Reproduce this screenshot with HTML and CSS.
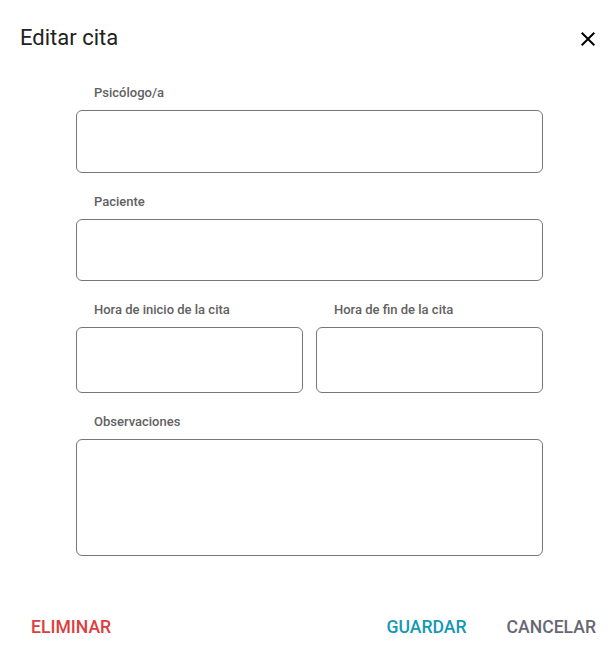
FILE: index.html
```html
<!DOCTYPE html>
<html lang="es">
<head>
<meta charset="utf-8">
<title>Editar cita</title>
<link rel="stylesheet" href="styles.css">
</head>
<body>
<div class="dialog">
  <header class="head">
    <h1 class="title">Editar cita</h1>
    <button class="close" aria-label="Cerrar">
      <svg width="24" height="24" viewBox="0 0 24 24"><path d="M19 6.41L17.59 5 12 10.59 6.41 5 5 6.41 10.59 12 5 17.59 6.41 19 12 13.41 17.59 19 19 17.59 13.41 12z" fill="#000"/></svg>
    </button>
  </header>
  <form class="form">
    <div class="field">
      <label class="label">Psicólogo/a</label>
      <div class="box h63"></div>
    </div>
    <div class="field">
      <label class="label">Paciente</label>
      <div class="box h62"></div>
    </div>
    <div class="row">
      <div class="field">
        <label class="label">Hora de inicio de la cita</label>
        <div class="box h66"></div>
      </div>
      <div class="field">
        <label class="label">Hora de fin de la cita</label>
        <div class="box h66"></div>
      </div>
    </div>
    <div class="field">
      <label class="label">Observaciones</label>
      <div class="box h117"></div>
    </div>
  </form>
  <footer class="actions">
    <button class="btn danger">Eliminar</button>
    <div class="right">
      <button class="btn primary">Guardar</button>
      <button class="btn muted">Cancelar</button>
    </div>
  </footer>
</div>
</body>
</html>
```
FILE: styles.css
```css
* { box-sizing: border-box; }
html, body { margin: 0; padding: 0; background: #fff; }
body { font-family: Roboto, "Noto Sans", sans-serif; }
.dialog { width: 614px; height: 648px; display: flex; flex-direction: column; }
.head {
  display: flex; align-items: center; justify-content: space-between;
  padding: 26px 14px 0 20px; height: 51px;
}
.title { margin: 0; font-size: 22px; font-weight: 400; line-height: 24px; color: #212121; margin-top: -2px; }
.close { border: 0; background: none; padding: 0; width: 24px; height: 24px; display: flex; cursor: pointer; margin-top: 1px; }
.form {
  display: flex; flex-direction: column; gap: 21px;
  padding: 34px 71px 0 76px;
}
.field { display: flex; flex-direction: column; gap: 9px; min-width: 0; }
.row { display: grid; grid-template-columns: 1fr 1fr; gap: 13px; }
.label {
  font-size: 13px; font-weight: 500; line-height: 16px; color: #616161;
  padding-left: 18px;
}
.box { border: 1px solid #777; border-radius: 6px; }
.h63 { height: 63px; }
.h62 { height: 62px; }
.h66 { height: 66px; }
.h117 { height: 117px; }
.actions {
  margin-top: auto; display: flex; justify-content: space-between; align-items: center;
  padding: 0 18px 0 31px; height: 40px; margin-bottom: 1px;
}
.right { display: flex; gap: 40px; }
.btn {
  border: 0; background: none; padding: 0; font-family: inherit;
  font-size: 17.6px; font-weight: 500; text-transform: uppercase; line-height: 20px;
  cursor: pointer; letter-spacing: 0;
}
.danger { color: #dc3e3e; }
.primary { color: #1499b3; }
.muted { color: #676774; }
```
